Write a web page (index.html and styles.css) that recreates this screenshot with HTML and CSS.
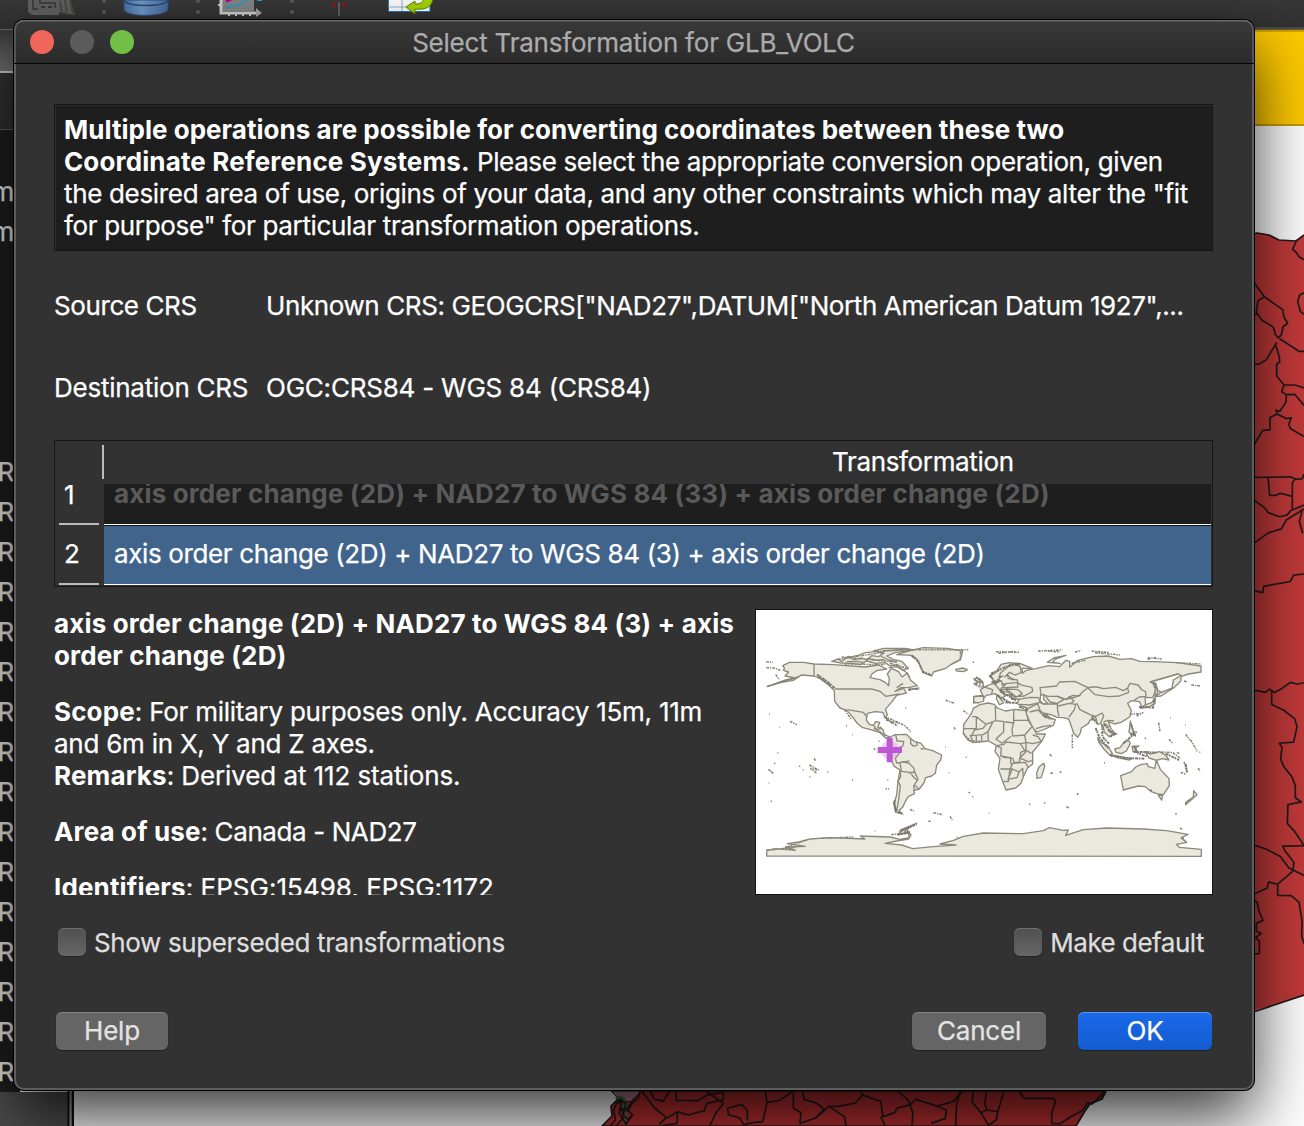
FILE: index.html
```html
<!DOCTYPE html>
<html lang="en">
<head>
<meta charset="utf-8">
<title>Select Transformation for GLB_VOLC</title>
<link rel="stylesheet" href="styles.css">
</head>
<body>
<div class="desktop">
  <svg class="backdrop" width="1304" height="1126" viewBox="0 0 1304 1126" aria-hidden="true">
    <defs>
      <linearGradient id="bar" x1="0" y1="0" x2="0" y2="1"><stop offset="0" stop-color="#383838"/><stop offset="1" stop-color="#303030"/></linearGradient>
      <linearGradient id="field" x1="0" y1="0" x2="0" y2="1"><stop offset="0" stop-color="#383838"/><stop offset="1" stop-color="#707070"/></linearGradient>
      <linearGradient id="db" x1="0" y1="0" x2="1" y2="0"><stop offset="0" stop-color="#4a72a8"/><stop offset=".4" stop-color="#7299cb"/><stop offset="1" stop-color="#466a9d"/></linearGradient>
    </defs>
    <rect width="1304" height="1126" fill="#fff"/>
    <rect width="1304" height="29" fill="url(#bar)"/>
    <rect x="1240" y="27" width="64" height="3" fill="#4c4a46"/>
    <rect x="1240" y="30" width="64" height="96" fill="#ffca00"/>
    <path d="M1240 30.800H1304M1240 125H1304" stroke="#c39a00" stroke-width="2"/>
    <rect y="29" width="20" height="1" fill="#686868"/>
    <rect y="30" width="20" height="41" fill="url(#field)"/>
    <rect y="71" width="20" height="2" fill="#c8c8c8"/>
    <rect y="73" width="20" height="56" fill="#323232"/>
    <rect y="129" width="20" height="1" fill="#606060"/>
    <rect y="130" width="20" height="962" fill="#1f1f1f"/>
    <rect y="1092" width="74" height="34" fill="#4e4e4e"/>
    <path d="M68.500 1085V1126M73 1085V1126" stroke="#0c0c0c" stroke-width="2"/>
    <path d="M70.500 1085V1126" stroke="#959595" stroke-width="2"/>
    <!-- toolbar icons -->
    <path d="M28 0H70L75 15L59 12V15H32L28 12Z" fill="#606060"/>
    <path d="M33 0V9H38M40 0V3H55V8" fill="none" stroke="#404040" stroke-width="2"/>
    <path d="M41 7H53" stroke="#383838" stroke-width="2" stroke-dasharray="4 3"/>
    <path d="M60 1L62 14M65 0L67 15M70 1L73 14" fill="none" stroke="#474a45" stroke-width="2"/>
    <path d="M124 0H168V9C168 17 124 18 124 9Z" fill="url(#db)" stroke="#2f5179"/>
    <path d="M124 1C130 7 162 7 168 1" fill="none" stroke="#28486f" stroke-width="1.500"/>
    <g fill="#5b5b5b"><circle cx="104" cy="1" r="2"/><circle cx="104" cy="12" r="2"/><circle cx="198" cy="1" r="2"/><circle cx="198" cy="12" r="2"/><circle cx="292" cy="1" r="2"/><circle cx="292" cy="12" r="2"/></g>
    <path d="M222 0H254V11H222Z" fill="#858585"/>
    <path d="M221 0V13H258" fill="none" stroke="#d0d0d0" stroke-width="3"/>
    <path d="M256 8L262 13L256 17Z" fill="#a5a5a5"/>
    <path d="M218 5H221M229 14V16M236 14V16M243 14V16M250 14V16" stroke="#ccc" stroke-width="2"/>
    <path d="M226 1L234 -2" stroke="#b50098" stroke-width="3"/>
    <path d="M226 8C234 5 241 6 247 0M257 0H262" fill="none" stroke="#2c9cb6" stroke-width="2"/>
    <path d="M339 2V16" stroke="#606060" stroke-width="2"/><path d="M330 2L336 4V8L333 5ZM348 2L342 4V8L345 5Z" fill="#a31313"/>
    <path d="M388.500 -1H430V11.500H388.500Z" fill="#fff" stroke="#1b7abd"/>
    <path d="M388 7H415M402 0V11" stroke="#9cb2c5"/>
    <path d="M433 -2C432 7 426 10 415 9V14L406 7L415 1V4C421 4 423 2 424 -2Z" fill="#a8d600" stroke="#5a8700"/>
    <!-- project map, eastern edge -->
    <path d="M1250 235L1257 233L1269 235L1279 240L1296 241L1304 235V996L1262 1008L1250 1012Z" fill="#c43a3a"/>
    <g class="boundary">
      <path d="M1250 235L1257 233L1269 235L1279 240L1296 241L1304 235"/>
      <g transform="translate(1240 0) scale(.33333 .35714)">
        <path d="M170 672L158 698L169 707L177 719L192 727M192 820L179 826L173 844L181 872L192 880M40 788L60 814L73 831L128 867L132 888L143 905L129 915L124 938L114 946L106 936L100 916L65 896L49 874L54 842L73 831M40 885L53 878M118 948L178 984L192 984M110 959L97 979L79 1007L58 1019L40 1021M106 964L118 999L119 1014L110 1020V1053L132 1078H165L192 1086M132 1078L125 1097L139 1105L164 1104L192 1135M139 1105L138 1126L119 1152L108 1148L111 1159L139 1172L154 1170L146 1188L151 1200L192 1222M111 1159L90 1169V1203L67 1206L40 1250M40 1334L56 1337L151 1335L170 1342L187 1340L192 1327M84 1337L89 1387H108L121 1381L157 1390V1427M165 1342L157 1352V1390M40 1399L74 1422L84 1435L118 1447L142 1442L151 1430L192 1414M40 1522L85 1492L124 1481L139 1456L192 1425M187 1427L178 1460L188 1493"/>
      </g>
      <g transform="translate(1240 540) scale(.33333 .37366)">
        <path d="M40 135L68 141L71 124L151 111L161 94L192 91M40 401L76 408L89 399L104 408L123 399L151 381L173 386L192 382M95 403V440L130 455L164 478L171 500L161 541L118 544L126 555L122 586L131 606L156 634L166 658V690L184 701L144 708L142 759L164 780L192 818L128 819L134 831L162 863L158 887L113 921V951L154 952L177 970L186 1020L185 1060L192 1080M40 816L78 827L121 847L147 878L192 898M40 948L81 932L86 915L110 921M40 962L52 970L57 994L69 1018L49 1026V1047L63 1053L47 1064L58 1073V1107L40 1108M40 1263L192 1218"/>
      </g>
      <!-- southern edge -->
      <path class="ground" d="M602 1126L612 1116L611 1106L620 1097L636 1091H1106L1102 1099L1090 1104L1085 1111L1076 1126Z"/>
      <path class="inlet" d="M611 1091L619 1099L630 1102L642 1091Z"/>
      <path class="vale" d="M616 1099Q624 1094 625 1107L624 1122"/>
      <path d="M616 1126L624 1117L621 1108L628 1111L632 1103L638 1098L640 1091M617 1104L622 1100L619 1113L626 1124L632 1116"/>
      <g transform="translate(560 1060) scale(.38265 .33333)">
        <path d="M130 198L145 180L140 150L153 118L172 130L165 166L178 178L190 165L174 147L190 125M214 94L246 142L278 173L260 192M236 94L246 117L270 124L285 94M303 94L304 121L360 122L386 104L427 97M382 94L427 130L408 158L391 198M427 97V119L384 130L377 152L335 165L307 155L280 174M307 155L306 190L260 198M536 94L541 127L573 122L607 95M541 127L530 185L503 188L480 194L470 174L440 164L438 144L475 134L489 150L490 182M610 94V144L630 158L627 190L668 174L703 139L726 139L772 129L791 105L786 94M634 94L638 118L672 130L690 148L668 174M703 139L743 170L748 198M791 105L838 124L844 170L875 158L880 145L915 134L906 116L883 94M838 170L850 198M915 134L930 118L985 138L1028 125L1051 94M915 134L922 158L920 198M985 138L1010 151L1007 175L970 190M1045 94L1036 140L1034 198M1080 94L1077 126L1099 157L1120 195L1140 180L1144 155L1160 94M1115 94L1110 130L1115 150L1099 158M1115 150L1144 155M1200 94L1213 115H1290L1295 126L1285 160V190L1307 191L1330 174L1366 151L1379 128L1390 132L1414 107L1422 94"/>
      </g>
    </g>
  </svg>

  <div class="layers">
    <span>m</span><span>m</span>
    <div class="layer-group"><span>R</span><span>R</span><span>R</span><span>R</span><span>R</span><span>R</span><span>R</span><span>R</span><span>R</span><span>R</span><span>R</span><span>R</span><span>R</span><span>R</span><span>R</span><span>R</span></div>
  </div>

  <main class="dialog">
    <header class="titlebar">
      <div class="lights"><i class="close"></i><i class="minimise"></i><i class="maximise"></i></div>
      <h1>Select Transformation for GLB_VOLC</h1>
    </header>
    <div class="content">
      <section class="notice">
        <div><b class="lead">Multiple operations are possible for converting coordinates between these two</b></div>
        <div><b>Coordinate Reference Systems.</b> <span class="tight">Please select the appropriate conversion operation, given</span></div>
        <div class="snug">the desired area of use, origins of your data, and any other constraints which may alter the "fit</div>
        <div class="snug">for purpose" for particular transformation operations.</div>
      </section>
      <dl class="crs">
        <dt>Source CRS</dt><dd class="source">Unknown CRS: GEOGCRS["NAD27",DATUM["North American Datum 1927",...</dd>
        <dt class="destination">Destination CRS</dt><dd>OGC:CRS84 - WGS 84 (CRS84)</dd>
      </dl>
      <section class="table">
        <div class="numbers"><span class="first">1</span><span>2</span></div>
        <div class="column">
          <div class="head">Transformation</div>
          <div class="row unavailable"><b>axis order change (2D) + NAD27 to WGS 84 (33) + axis order change (2D)</b></div>
          <div class="row selected tight">axis order change (2D) + NAD27 to WGS 84 (3) + axis order change (2D)</div>
        </div>
      </section>
      <section class="details">
        <div class="description">
          <p><b>axis order change (2D) + NAD27 to WGS 84 (3) + axis<br>order change (2D)</b></p>
          <p><b>Scope</b><span class="scope">: For military purposes only. Accuracy 15m, 11m<br>and 6m in X, Y and Z axes.</span><br><b>Remarks</b><span class="remarks">: Derived at 112 stations.</span></p>
          <p><b>Area of use</b><span class="source">: Canada - NAD27</span></p>
          <p><b>Identifiers</b><span class="loose">: EPSG:15498, EPSG:1172</span></p>
        </div>
        <svg class="world" viewBox="18 30 1368 852" role="img" aria-label="Area of use">
          <g class="land">
            <!-- Antarctica -->
            <path d="M50 768V751L76 746L136 751L106 741L166 739L112 731L150 725L180 717L240 713L345 717L330 708L420 711L450 718L478 713L475 699L448 703L456 688L494 672L470 688L483 705L476 717L440 723L405 730L455 735L488 746L550 740L618 735L570 732L610 721L640 709L700 699L820 701L880 692L898 683L940 691L955 690L947 706L1000 689L1070 684L1180 687L1250 692L1314 703L1293 714L1310 727L1279 733L1288 742L1354 748V769Z"/>
            <!-- North America -->
            <path d="M104 205L98 197L119 187L160 187L192 192L250 194L345 201L385 195L410 207L380 212L366 222L360 233L390 239L407 248L416 257L418 235L412 222L424 205L446 215L456 231L472 219L482 241L502 257L476 263L453 263L435 274L461 265L469 279L440 286L426 305L406 328L412 344L406 354L398 337L375 335L352 340L349 360L358 373L370 376L377 365L389 367L384 382L399 388L403 404L420 411L408 415L390 398L362 389L336 382L321 369L307 350L291 331L270 324L254 304L253 272L237 256L211 236L192 228L154 225L130 241L91 248L52 260L107 240L136 234L105 228L116 216L100 211Z"/>
            <path class="border" d="M192 192V228M256 267H365L390 274L407 289L448 282M292 329L340 337L351 351M370 376L383 391L394 380M440 263L459 250"/>
            <!-- Greenland -->
            <path d="M440 164L482 151L520 143L592 145L638 153L632 178L602 194L587 205L550 216L545 228L520 218L511 197L501 177L486 166Z"/>
            <path d="M617 208L638 204L652 209L641 215L620 213Z"/>
            <!-- Canadian arctic -->
            <path d="M245 184L265 177L274 184L295 169L312 179L336 174L350 180L365 167L386 170L402 159L370 153L402 145L466 145L490 150L435 158L410 168L430 178L455 184L475 205L458 211L443 194L421 198L404 188L377 190L349 183L331 194L308 190L275 189Z"/>
            <path class="border" d="M283 176L305 170L325 166L346 158L381 154M290 185L320 184L345 188M352 175L384 181L402 178M398 152L440 150L480 148M392 168L415 180L440 186M415 203L440 200L465 214L480 232"/>
            <!-- South America -->
            <path d="M420 411L436 404L470 403L480 414L493 424L513 430L525 446L548 452L575 465L572 480L560 495L556 520L545 528L527 533L522 548L508 567L491 572L494 581L475 589L466 604L459 620L448 631L455 641L436 636L433 607L440 585L444 543L450 510L433 499L420 474L420 455L425 435L413 417Z"/>
            <path class="border" d="M437 404L441 423L461 424L459 438L447 443L448 460L436 475L440 489L454 487L478 483M482 415V430L489 438L501 436L500 424M450 511L452 530L444 544L451 557L446 600L440 632M450 487L454 514L480 517L493 534L502 541M454 485L478 490L492 505L494 516L475 519M494 516L504 538L493 555L506 566M491 555L493 572"/>
          </g>
          <g class="land" transform="translate(690)">
            <!-- Europe and Asia -->
            <path d="M28 230L50 215L63 193L87 188L121 191L157 205L126 205L128 220L138 211L168 206L205 197L238 200L258 181L269 184V202L293 181L340 170L384 168L420 178L454 176L480 184L524 185L590 188L663 198V216L626 222L604 229L602 244L583 262L543 288L525 290L543 277L576 264L579 237L594 222L563 231L511 246L528 252V268L518 293L495 292L497 317L486 322L479 305L454 302L443 310L454 331L449 351L423 367L403 372L385 365L393 386L404 399L388 410L373 397L370 382L362 371L352 373L347 360L331 359L325 371L304 384L301 399L293 412L281 400L272 373L266 357L250 353L232 352L212 344L197 340L210 354L226 359L220 376L188 390L173 396L160 388L146 357L138 340L145 325L131 321L112 311L117 297L95 298L89 278L68 274L61 269L76 288L58 299L46 281L19 286L4 303L-19 309L-19 289L8 286L1 269L22 257L43 249L37 234Z"/>
            <path class="sea" d="M511 246L563 231L594 222L604 226L580 240L576 264L543 277L533 270L528 252Z"/>
            <path class="border" d="M70 227L58 234L61 219L81 203L91 193L110 191L121 202L124 218L105 225L89 217L73 232M105 194L121 199M64 253L83 250L112 248L127 256L156 262L158 274L133 288L105 290L91 285M82 235L112 240L114 261L72 263L64 242L40 253M9 260L38 269L34 285M58 270L83 267L114 269L127 281L99 297L87 283L72 285M46 254L59 270L80 250M117 298L150 292L176 293L180 307L149 315L119 313M180 263L230 258L238 246L284 244L324 263L308 275L297 288L278 286L257 298L234 289L207 289L183 285Z"/>
            <path class="border" d="M197 289L210 306L232 310L252 298L228 288M232 312L233 332L237 350M235 318L268 310L287 313L283 329L267 351M257 298L287 291L302 284M290 309L300 329L330 344L347 349L366 339L371 348L362 369M266 289L282 302L272 311M324 264L333 261L351 261L370 266L407 262L430 272L443 264L446 277L418 288L386 290L345 284L324 264M443 264L450 250L474 255L486 270L497 275L498 289L478 291L462 301M145 325L173 311L181 333L202 345M149 336L174 330L198 355M168 386L190 379L213 376M180 308L190 312L230 312M334 350L346 351L351 362M370 368L388 382M371 365L385 361L402 363"/>
            <path class="sea" d="M182 286L193 283L190 297L202 309L190 312L180 301Z"/>
            <!-- Africa -->
            <path d="M-20 325L0 314L25 309L43 313L52 324L76 333L104 328L137 332L145 361L164 391L169 402L196 402L185 424L158 456L158 492L143 503L130 530L123 550L107 564L78 570L69 547L55 508L60 475L45 455L49 436L25 423L-20 428L-36 420L-50 401L-49 374L-26 341Z"/>
            <path class="border" d="M-50 386H-11V350H-24M-11 350L18 373L47 362L46 320M18 373L9 385L-17 390L-25 407L9 404L24 395L38 367M48 362L101 369V331M101 361H147M101 369L96 388L98 408L134 405L155 381M71 363V395L48 417L66 430L93 409M24 395L25 421M-30 404L-21 426M-11 406V427M5 404V423M48 438L72 433L78 426L121 431L137 456L119 475V486L103 488L98 475L64 468M62 469L64 444L53 439M134 406L138 427L158 431L185 425M121 431L138 428V451L155 460M137 451L122 457L121 475L145 485L157 482M61 507H97L117 516L128 505L130 531M97 507L84 538L111 533L117 516M89 510L98 490L136 487L146 504M90 505L85 545L70 544M65 469L74 473L91 472L93 493M158 405L174 410L185 426"/>
            <!-- Britain, Spain and Italy -->
            <path d="M-10 231L8 247L11 261L-4 260L1 248L-16 241ZM-18 251L-8 247L-10 257ZM52 284L71 309L58 314L49 295ZM-18 290L11 288L11 303L-5 309L-19 306Z"/>
            <path d="M191 490L194 499L184 532L171 535L170 519L177 501Z"/>
            <!-- Indonesia, Japan and New Guinea -->
            <path d="M353 413L364 428L384 438L397 461L390 466L374 450L356 426ZM404 447L420 443L429 431L445 420L451 430L439 453L424 461L408 457ZM394 465L424 470L456 476L448 480L412 473ZM456 439L477 438L464 445L473 458L459 454ZM496 455L510 462L538 455L556 465L567 480L548 476L529 481L507 474ZM451 363L459 390L466 408L447 397ZM526 293L525 310L506 321L482 325L495 315L515 308ZM526 248L533 278L525 289Z"/>
            <!-- Oceania -->
            <path d="M422 527L455 515L467 501L484 493L502 491L505 500L524 505L529 480L541 508L567 536L568 557L550 584L530 581L512 574L496 560L475 558L430 570ZM535 586L548 585L545 600ZM641 572L651 584L617 614L617 607L640 591Z"/>
            <path d="M202 187L221 174L258 166L224 178L218 187L240 190Z"/>
          </g>
          <g class="islands">
            <path d="M49 185L69 187M49 203L73 204L91 211M77 224L88 239M120 364L141 374M178 495L206 510L181 505L202 521M55 508L70 520L60 513M52 259L107 242L150 229M192 475L198 484M403 350L432 361L466 378L482 395M408 360L446 370M408 352L428 372M587 301L612 309M480 628L492 634M550 638L579 644M600 649L607 660M535 664H542M612 382L616 388M284 330L304 358M264 178L400 157M275 171L440 186M284 192L405 194M380 155L470 149M420 190L475 206M470 149L655 149M632 155L630 180L602 194M404 352L443 379M448 696L501 669M424 704L479 697M50 751L140 742M95 747L170 720M215 715L310 711M372 385L407 406M474 271L506 263M670 235L692 248M640 332L655 343M640 400L660 422L690 424M512 446H530"/>
            <path class="coast" d="M201 224L230 243L256 266M205 230L240 256M434 600L434 620L443 636L461 643M431 606L438 634M485 167L505 185L518 215L545 226M442 704L479 697L456 690L500 673M476 268L508 266M686 235L700 250"/>
            <g transform="translate(690)">
              <path d="M48 155L118 157M55 160L105 154M174 153L247 150M203 153L240 156M285 157L303 151M335 153L386 157M345 158L420 165M503 173L545 177M503 178L530 172M275 190L316 181M590 188L663 192M277 403V445M209 463L215 469M211 520L219 519M239 515L244 518M259 620L266 624M536 368L540 396M567 418L578 430M617 403L630 420M632 420L652 454M655 504L660 515M612 243L623 246M634 255L663 258M602 517L619 523M600 684L609 690M606 711L619 727M586 640L590 643M188 342L217 358M508 571L517 571M543 456L579 458L602 476M612 485L622 517M450 343L487 340M470 348L490 337"/>
              <path class="coast" d="M33 221L81 199L120 191M34 248L60 240M61 274L110 302M76 307L114 309M52 286L93 310M30 224L49 256M78 267L105 289M46 250L62 228M80 225L100 240M190 345L210 357M347 384L358 412L387 448M367 374L367 410L387 431M372 372L400 405M390 466L430 474L493 476M453 374L464 405L451 402M430 430L470 395M461 437L475 460L500 469M460 455L530 458M557 461L597 480M617 492L621 517M477 320L519 323L523 295M384 391L407 402L390 410M335 352L352 370M520 248L525 265M60 270L74 283M117 320L142 330"/>
            </g>
            <path d="M58 342h2M88 382h2M288 378h3M307 405h2M386 424h3M371 445l5 4M466 325h3M306 541h3M412 540h3M407 566h4M414 566h3M56 549h2M62 602l3 3M82 458h3M72 490h4M147 499h4M158 510h3M178 531h3M232 515h3M668 187h4M586 442h2M596 518h2M647 472h3M656 576l4 4M667 590h3M716 640h2M837 613h4M882 609h4M983 579v6M1062 488h3M1184 415h4M1260 354h2M1305 374h2M1281 457l7 4M1348 457h3M374 694h2M620 712h3"/>
          </g>
          <circle cx="419" cy="450" r="28" fill="#d7a6e6" opacity=".5"/>
          <path d="M419 413V487M383 450H456" stroke="#bd57d4" stroke-width="18"/>
        </svg>
      </section>
      <div class="options">
        <label><i class="box"></i><span class="tight">Show superseded transformations</span></label>
        <label><i class="box"></i><span class="default">Make default</span></label>
      </div>
      <footer>
        <button class="help">Help</button>
        <button>Cancel</button>
        <button class="primary">OK</button>
      </footer>
    </div>
  </main>
</div>
</body>
</html>
```
FILE: styles.css
```css
* { box-sizing: border-box; }
body { margin: 0; background: #fff; }
.desktop {
  position: relative;
  width: 1304px;
  height: 1126px;
  overflow: hidden;
  font: 26px/32px Inter, "Liberation Sans", sans-serif;
  letter-spacing: -.22px;
  -webkit-text-stroke: .25px;
  color: #fff;
  white-space: nowrap;
}
.backdrop { position: absolute; inset: 0; }
.boundary path { fill: none; stroke: #211b1b; stroke-width: 1.7; vector-effect: non-scaling-stroke; stroke-linejoin: round; }
.boundary .ground { fill: #b92f31; }
.boundary .inlet { fill: #bc8090; stroke-width: 1; }
.boundary .vale { stroke: #49754e; stroke-width: 4; }
.layers { position: absolute; left: 0; top: 172px; width: 14px; overflow: hidden; display: flex; flex-direction: column; align-items: flex-end; line-height: 40px; color: #f0f0f0; }
.layer-group { display: flex; flex-direction: column; padding-top: 200px; }
.dialog {
  position: absolute;
  left: 14px;
  top: 20px;
  width: 1240px;
  height: 1070px;
  border-radius: 10px;
  background: #323232;
  box-shadow: inset 0 0 0 2px #5d5d5f, 0 0 0 1px #000, 0 28px 66px rgba(0, 0, 0, .78);
}
.titlebar { height: 44px; padding: 0 16px; display: flex; align-items: center; border-bottom: 1px solid #050505; border-radius: 10px 10px 0 0; background: linear-gradient(#393939, #2b2b2b); box-shadow: inset 0 2px 0 -.5px #6a6a6a, inset 2px 0 0 #555, inset -2px 0 0 #555; }
.lights { display: flex; gap: 16px; }
.lights i { width: 24px; height: 24px; border-radius: 50%; background: #5b5b5b; }
.lights .close { background: #f0665b; }
.lights .maximise { background: #72bf48; }
h1 { flex: 1; margin: 2px 105px 0 0; text-align: center; font-size: 26px; font-weight: 400; line-height: 32px; color: #ababab; }
.content { padding: 40px 41px 0 40px; }
.notice { height: 147px; padding: 9px 9px; border: 1px solid #141414; background: #1e1e1e; box-shadow: inset 1px 1px 0 #2e2e2e; }
.notice div { height: 32px; }
b { font-weight: 700; letter-spacing: .14px; -webkit-text-stroke: 0; }
.lead { letter-spacing: .025px; }
.tight { letter-spacing: -.37px; }
.snug { letter-spacing: -.33px; }
.source { letter-spacing: -.4px; }
.scope { letter-spacing: -.25px; }
.remarks { letter-spacing: -.1px; }
.loose { letter-spacing: .02px; }
.default { letter-spacing: -.5px; }
.crs { display: grid; grid-template-columns: 212px 1fr; grid-template-rows: 32px 32px; row-gap: 50px; margin: 39px 0 0; }
dt { letter-spacing: -.4px; }
.destination { letter-spacing: -.24px; }
dd { margin: 0; }
.table { display: flex; height: 147px; margin-top: 36px; border: 1px solid #161616; overflow: hidden; }
.numbers { width: 49px; padding: 43px 5px 0 4px; }
.numbers span { display: block; height: 60px; padding: 13px 0 0 5px; border-bottom: 2px solid #bcbcbc; }
.numbers .first { height: 41px; padding-top: 0; line-height: 22px; }
.column { flex: 1; }
.head { height: 43px; padding: 5px 0 0 728px; letter-spacing: -.35px; position: relative; }
.head::before { content: ""; position: absolute; left: -2px; top: 4px; width: 2px; height: 34px; background: #bcbcbc; }
.row { padding-left: 10px; border-bottom: 1px solid #fff; margin-right: 1px; }
.row.unavailable { height: 41px; overflow: hidden; background: #1e1e1e; color: #5a5a5a; line-height: 20px; }
.row.selected { height: 60px; padding-top: 12px; border-top: 1px solid #151515; background: #41648c; }
.details { display: flex; justify-content: space-between; height: 287px; margin-top: 21px; }
.description { height: 287px; overflow: hidden; }
.description p { margin: 0 0 24px; }
.world { display: block; width: 458px; height: 286px; margin-top: 1px; border: 1px solid #141414; background: #fff; }
.land path { fill: #ebe9df; stroke: #8c897b; stroke-width: 4; stroke-linejoin: round; }
.land .sea { fill: #fff; }
.land .border { fill: none; }
.islands path { fill: none; stroke: #858274; stroke-width: 4.5; stroke-dasharray: 8 3 4 3; }
.islands .coast { stroke: #7c796c; stroke-width: 6; stroke-dasharray: 9 2 5 3; }
.options { display: flex; justify-content: space-between; margin-top: 32px; padding: 0 9px 0 4px; color: #dedede; }
label { display: flex; gap: 8px; }
.box { width: 28px; height: 28px; margin-top: 1px; border-radius: 6px; background: linear-gradient(#505050, #666); box-shadow: 0 1px 1px #222, inset 0 1px 0 #6e6e6e; }
footer { display: flex; margin-top: 53px; padding: 0 1px 0 2px; gap: 32px; }
button { width: 134px; height: 38px; border: 0; padding: 0 0 1px; border-radius: 6px; background: #656565; box-shadow: 0 1px 1px #202020, inset 0 1px 0 #828282; color: #e3e3e3; font: inherit; letter-spacing: inherit; -webkit-text-stroke: inherit; }
.help { width: 112px; margin-right: auto; }
.primary { background: linear-gradient(#1a6ae9, #145bd0); box-shadow: 0 1px 1px #202020, inset 0 1px 0 #5b96f2; color: #fff; }
```
